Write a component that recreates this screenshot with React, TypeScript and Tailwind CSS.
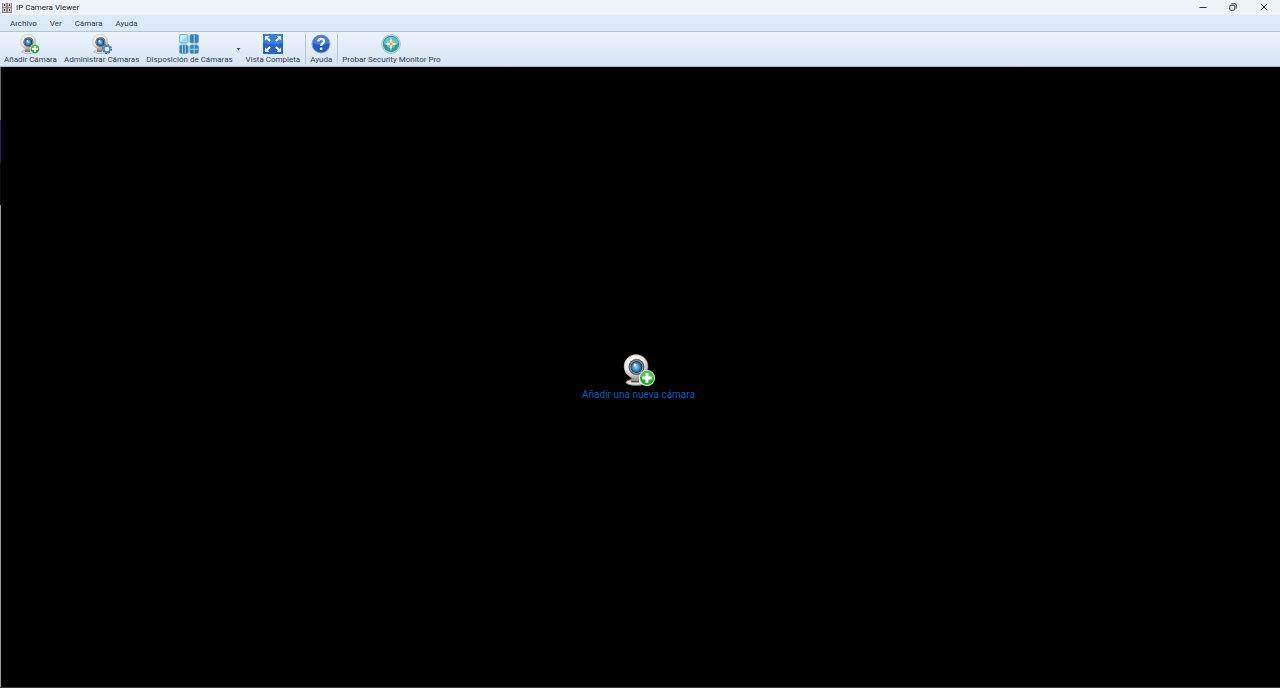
import { useId } from "react";
import type { ReactNode } from "react";

const menus = ["Archivo", "Ver", "Cámara", "Ayuda"];

function Webcam({ className, children }: { className: string; children?: ReactNode }) {
  const id = useId();
  return (
    <svg viewBox="0 0 32 32" className={className} aria-hidden="true">
      <defs>
        <radialGradient id={`${id}shell`} cx="0.4" cy="0.3" r="0.7">
          <stop offset="0" stopColor="#ffffff" />
          <stop offset="0.65" stopColor="#eae4e1" />
          <stop offset="1" stopColor="#aaa29e" />
        </radialGradient>
        <radialGradient id={`${id}lens`} cx="0.45" cy="0.5" r="0.6">
          <stop offset="0" stopColor="#a3dbfb" />
          <stop offset="0.55" stopColor="#3a8bca" />
          <stop offset="1" stopColor="#12406f" />
        </radialGradient>
      </defs>
      <path d="M9 21h8l1 5H8z" fill="#8d8785" />
      <ellipse cx="13" cy="28.3" rx="10" ry="3" fill="#e3dedb" stroke="#8c8583" strokeWidth="0.8" />
      <path d="M8 27.4h8" stroke="#57504e" strokeWidth="2" />
      <circle cx="13" cy="12.5" r="12" fill={`url(#${id}shell)`} stroke="#a39c99" strokeWidth="0.5" />
      <circle cx="13.5" cy="13" r="8" fill="#5b5a5e" />
      <circle cx="13.5" cy="13" r="6.8" fill="#9aa5ae" />
      <circle cx="13.5" cy="13" r="6" fill="#27384a" />
      <circle cx="13.5" cy="13" r="5.3" fill={`url(#${id}lens)`} />
      <circle cx="12" cy="11" r="1.4" fill="#e5f6ff" />
      {children}
    </svg>
  );
}

function PlusBadge() {
  return (
    <g>
      <circle cx="24" cy="24" r="8" fill="#e9f9e6" />
      <circle cx="24" cy="24" r="7" fill="#22a536" />
      <path d="M17.6 23a6.4 6.4 0 0 1 12.8 0z" fill="#4fc257" />
      <path d="M24 19.2v9.6M19.2 24h9.6" stroke="#fff" strokeWidth="3" />
    </g>
  );
}

function GearBadge() {
  return (
    <g>
      <circle cx="24" cy="24" r="6.4" fill="none" stroke="#3b66a8" strokeWidth="3" strokeDasharray="2.8 2.23" />
      <circle cx="24" cy="24" r="5" fill="#e3edfa" stroke="#5583c6" strokeWidth="2.6" />
    </g>
  );
}

function LayoutIcon() {
  return (
    <svg viewBox="0 0 20 20" className="size-5" aria-hidden="true">
      <g stroke="#6ba3c4" strokeWidth="0.8">
        <rect x="0.5" y="0.5" width="8.6" height="8.6" rx="1.6" fill="#93dbf3" />
        <rect x="10.9" y="0.5" width="8.6" height="8.6" rx="1.6" fill="#3a80b3" />
        <rect x="0.5" y="10.9" width="8.6" height="8.6" rx="1.6" fill="#3a80b3" />
        <rect x="10.9" y="10.9" width="8.6" height="8.6" rx="1.6" fill="#3a80b3" />
      </g>
      <path d="M1.2 8V2.2l1-1h6z" fill="#c6f0fc" />
      <path d="M15.2 1v8M3.4 11.2v8M6.2 11.2v8M15.2 11.2v8M11 15.2h8" stroke="#b4deee" strokeWidth="0.9" />
    </svg>
  );
}

function FullScreenIcon() {
  return (
    <svg viewBox="0 0 20 20" className="size-5" aria-hidden="true">
      <rect width="20" height="20" rx="1" fill="#2863c2" />
      <path d="M0 1a1 1 0 0 1 1-1h18a1 1 0 0 1 1 1v8Q10 12 0 9z" fill="#3f7dd2" />
      <path
        d="M2 2h4.5L5 3.5l2.8 2.8-1.5 1.5L3.500 5 2 6.500zM18 2h-4.500L15 3.500l-2.800 2.800 1.500 1.500L16.500 5 18 6.500zM2 18h4.500L5 16.500l2.800-2.800-1.500-1.500L3.500 15 2 13.500zM18 18h-4.500L15 16.500l-2.800-2.800 1.500-1.500L16.500 15l1.500-1.500z"
        fill="#f2f8ff"
      />
    </svg>
  );
}

function HelpIcon() {
  return (
    <svg viewBox="0 0 20 20" className="size-5" aria-hidden="true">
      <circle cx="10" cy="10" r="9" fill="#2858bd" stroke="#8ea9dc" strokeWidth="1" />
      <path d="M2 9a8 8 0 0 1 16 0q-8 4-16 0z" fill="#4f7ad6" />
      <path
        d="M7.2 7.5C7.2 3.8 13 4 13 7.3c0 2.2-2.9 2.3-2.9 4.7"
        fill="none"
        stroke="#fff"
        strokeWidth="2.2"
      />
      <circle cx="10.1" cy="14.8" r="1.4" fill="#fff" />
    </svg>
  );
}

function MonitorIcon() {
  return (
    <svg viewBox="0 0 20 20" className="size-5" aria-hidden="true">
      <circle cx="10" cy="10" r="9.3" fill="#d3dedf" stroke="#9fb0b4" strokeWidth="0.8" />
      <circle cx="10" cy="10" r="8.2" fill="#2a9dad" />
      <path d="M2.6 9a7.5 7.5 0 0 1 14.8 0q-7 3-14.800 0z" fill="#5fc0ca" />
      <circle cx="10" cy="10" r="3.8" fill="none" stroke="#b9d7bd" strokeWidth="0.8" />
      <path d="M10 3l1.4 5.600L17 10l-5.600 1.400L10 17l-1.400-5.600L3 10l5.600-1.400z" fill="#fbeaba" />
      <circle cx="10" cy="10" r="1.3" fill="#d09a50" />
    </svg>
  );
}

function AppIcon() {
  return (
    <svg viewBox="0 0 10 10" className="size-2.5" aria-hidden="true">
      <rect width="10" height="10" fill="#8d888a" />
      <path d="M1 0h3v4H1zM6 0h3v4H6zM1 5h3v4H1zM6 5h3v4H6z" fill="#cfc9c8" />
      <path d="M2 1h1v2H2zM7 1h1v2H7zM2 6h1v2H2zM7 6h1v2H7z" fill="#3a373b" />
    </svg>
  );
}

function ToolButton({ icon, label }: { icon: ReactNode; label: string }) {
  return (
    <button type="button" className="flex flex-col items-center pt-0.5 pr-[3px] pl-1 whitespace-nowrap">
      {icon}
      <span>{label}</span>
    </button>
  );
}

function Separator() {
  return <span className="my-0.5 ml-0.5 w-px bg-[#b9c6d6]" />;
}

function TitleBar() {
  return (
    <header className="flex h-[15px] items-center bg-[#eff4fb] pl-0.5">
      <AppIcon />
      <h1 className="ml-1 text-[#22262c]">IP Camera Viewer</h1>
      <div className="ml-auto flex h-3.5 self-start text-[#33373d]">
        <button type="button" aria-label="Minimizar" className="flex w-[30px] items-center justify-center">
          <svg viewBox="0 0 8 8" className="size-2" fill="none" stroke="currentColor">
            <path d="M0.5 4.5h7" />
          </svg>
        </button>
        <button type="button" aria-label="Restaurar" className="flex w-[30px] items-center justify-center">
          <svg viewBox="0 0 8 8" className="size-2" fill="none" stroke="currentColor">
            <rect x="0.8" y="2.2" width="5" height="5" rx="1" />
            <path d="M2.3 0.8h3.5a1.5 1.5 0 0 1 1.5 1.5v3.3" />
          </svg>
        </button>
        <button type="button" aria-label="Cerrar" className="flex w-8 items-center justify-center">
          <svg viewBox="0 0 8 8" className="size-2" fill="none" stroke="currentColor">
            <path d="M0.8 0.8l6.4 6.4M7.2 0.8L0.8 7.2" />
          </svg>
        </button>
      </div>
    </header>
  );
}

export default function App() {
  return (
    <div className="flex h-screen flex-col bg-black font-[Roboto,'Open_Sans',sans-serif] text-[8px] leading-[11px] text-[#2f4058]">
      <TitleBar />
      <nav className="flex h-4 items-center gap-px bg-[#dce9f8] pl-1">
        {menus.map((menu) => (
          <button key={menu} type="button" className="px-1.5">
            {menu}
          </button>
        ))}
      </nav>
      <div
        role="toolbar"
        aria-label="Herramientas"
        className="flex h-9 border-y border-t-[#b4c5d8] border-b-[#a5b5c8] bg-linear-to-b from-[#ecf4fd] to-[#d7e4f4]"
      >
        <ToolButton icon={<Webcam className="size-5"><PlusBadge /></Webcam>} label="Añadir Cámara" />
        <ToolButton icon={<Webcam className="size-5"><GearBadge /></Webcam>} label="Administrar Cámaras" />
        <ToolButton icon={<LayoutIcon />} label="Disposición de Cámaras" />
        <button type="button" aria-label="Elegir disposición" className="flex w-1.5 items-center justify-center">
          <svg viewBox="0 0 5 3" className="h-[3px] w-[5px]" fill="#3f4f66">
            <path d="M0.5 0h4L2.5 2.5z" />
          </svg>
        </button>
        <ToolButton icon={<FullScreenIcon />} label="Vista Completa" />
        <Separator />
        <ToolButton icon={<HelpIcon />} label="Ayuda" />
        <Separator />
        <ToolButton icon={<MonitorIcon />} label="Probar Security Monitor Pro" />
      </div>
      <main className="flex min-h-0 flex-1 border-b border-[#34343a]">
        <div className="flex w-px flex-col">
          <span className="h-[53px] bg-[#686868]" />
          <span className="h-[43px] bg-[#1b2850]" />
          <span className="h-[42px] bg-[#080808]" />
          <span className="flex-1 bg-[#9a9a9a]" />
        </div>
        <div className="flex flex-1 items-center justify-center pr-1">
          <button
            type="button"
            className="flex flex-col items-center gap-[3px] text-[10px] leading-3 text-[#1659b5]"
          >
            <Webcam className="size-8"><PlusBadge /></Webcam>
            <span>Añadir una nueva cámara</span>
          </button>
        </div>
      </main>
    </div>
  );
}
